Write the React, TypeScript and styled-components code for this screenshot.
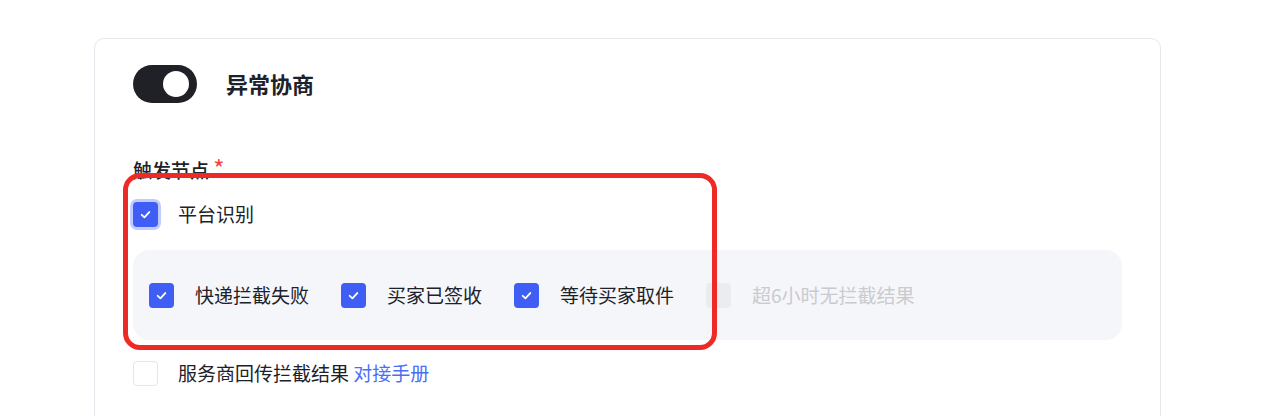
import React from 'react'
import { styled, createGlobalStyle } from 'styled-components'

const GlobalStyle = createGlobalStyle`
  body {
    margin: 0;
    background: #ffffff;
    font-family: 'Noto Sans CJK SC', 'Noto Sans', sans-serif;
    color: #1d2129;
  }
`

interface CheckProps {
  checked?: boolean
  disabled?: boolean
  focused?: boolean
}

function CheckBox(props: CheckProps) {
  const { checked = false, disabled = false, focused = false } = props
  return (
    <Box $checked={checked} $disabled={disabled} $focused={focused}>
      {checked && (
        <svg width='13' height='13' viewBox='0 0 12 12' fill='none'>
          <path d='M2.5 6.3 L5 8.6 L9.5 3.7' stroke='#fff' strokeWidth='1.7' strokeLinecap='round' strokeLinejoin='round' />
        </svg>
      )}
    </Box>
  )
}

const subItems = [
  { text: '快递拦截失败', checked: true },
  { text: '买家已签收', checked: true },
  { text: '等待买家取件', checked: true },
  { text: '超6小时无拦截结果', checked: false, disabled: true },
]

export default function App() {
  return (
    <>
      <GlobalStyle />
      <Page>
        <Card>
          <Header>
            <Switch>
              <span className='knob' />
            </Switch>
            <Title>异常协商</Title>
          </Header>

          <FieldLabel>
            触发节点 <span className='required'>*</span>
          </FieldLabel>

          <CheckRow>
            <CheckBox checked focused />
            <span>平台识别</span>
          </CheckRow>

          <SubPanel>
            {subItems.map((item) => (
              <SubItem key={item.text} $disabled={item.disabled}>
                <CheckBox checked={item.checked} disabled={item.disabled} />
                <span>{item.text}</span>
              </SubItem>
            ))}
          </SubPanel>

          <CheckRow className='last'>
            <CheckBox />
            <span>
              服务商回传拦截结果 <Link>对接手册</Link>
            </span>
          </CheckRow>

          <Highlight />
        </Card>
      </Page>
    </>
  )
}

const Page = styled.div`
  padding: 38px 0 0 94px;
  height: 416px;
  box-sizing: border-box;
  overflow: hidden;
`

const Card = styled.div`
  position: relative;
  width: 1067px;
  box-sizing: border-box;
  padding: 26px 38px 80px;
  border: 1px solid #e6e7ec;
  border-radius: 10px;
  background: #ffffff;
`

const Header = styled.div`
  display: flex;
  align-items: center;
  gap: 29px;
`

const Switch = styled.div`
  width: 64px;
  height: 38px;
  border-radius: 19px;
  background: #1f2127;
  display: flex;
  align-items: center;
  justify-content: flex-end;
  padding: 0 8px;
  box-sizing: border-box;

  .knob {
    width: 26px;
    height: 26px;
    border-radius: 50%;
    background: #ffffff;
  }
`

const Title = styled.div`
  font-size: 22px;
  font-weight: 700;
  color: #1d2129;
  line-height: 38px;
  margin-top: -3px;
`

const FieldLabel = styled.div`
  margin-top: 55px;
  font-size: 19px;
  font-weight: 500;
  line-height: 24px;
  color: #1d2129;

  .required {
    color: #f53f3f;
    font-size: 24px;
    font-weight: 400;
    line-height: 20px;
  }
`

const CheckRow = styled.label`
  display: flex;
  align-items: center;
  gap: 20px;
  margin-top: 19px;
  font-size: 19px;
  line-height: 26px;
  color: #1d2129;

  &.last {
    margin-top: 20px;
  }
`

const Box = styled.span<{ $checked: boolean; $disabled: boolean; $focused: boolean }>`
  flex: none;
  width: 25px;
  height: 25px;
  box-sizing: border-box;
  border-radius: 4px;
  display: flex;
  align-items: center;
  justify-content: center;
  background: ${(p) => (p.$disabled ? '#ebecf0' : p.$checked ? '#3f5ef6' : '#ffffff')};
  border: ${(p) => (p.$checked || p.$disabled ? 'none' : '1px solid #e3e5ea')};
  box-shadow: ${(p) => (p.$focused ? '0 0 0 3px #bfccfd' : 'none')};
`

const SubPanel = styled.div`
  margin-top: 23px;
  height: 90px;
  border-radius: 16px;
  background: #f5f6f9;
  padding: 0 16px;
  display: flex;
  align-items: center;
  gap: 32px;
`

const SubItem = styled.label<{ $disabled?: boolean }>`
  display: flex;
  align-items: center;
  gap: 21px;
  font-size: 19px;
  line-height: 26px;
  color: ${(p) => (p.$disabled ? '#c9cbd0' : '#1d2129')};
`

const Link = styled.a`
  color: #4a6ff6;
  cursor: pointer;
`

const Highlight = styled.div`
  position: absolute;
  left: 28px;
  top: 134px;
  width: 594px;
  height: 177px;
  box-sizing: border-box;
  border: 5px solid #ee2a26;
  border-radius: 17px;
  pointer-events: none;
`
